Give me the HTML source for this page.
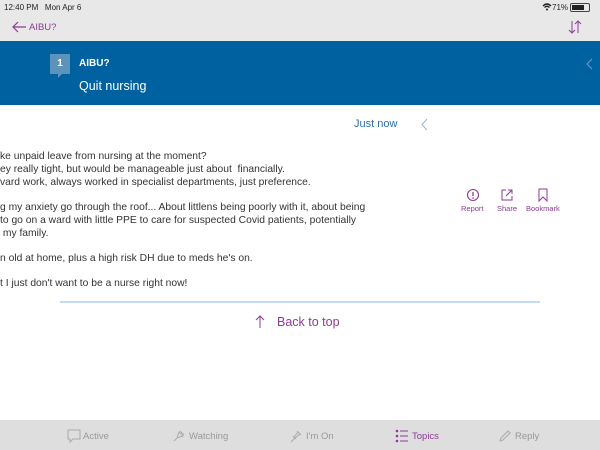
<!DOCTYPE html>
<html><head><meta charset="utf-8"><style>
*{margin:0;padding:0;box-sizing:border-box}
body{width:600px;height:450px;overflow:hidden;background:#fff;font-family:"Liberation Sans",sans-serif;position:relative}
.a{position:absolute;white-space:nowrap}
.top{left:0;top:0;width:600px;height:41px;background:#e8e8e8}
.blue{left:0;top:41px;width:600px;height:64px;background:#0061a1}
.t{font-size:10.3px;color:#333;left:0}
.bar{left:0;top:420px;width:600px;height:30px;background:#dedede}
.tab{font-size:9.5px;color:#999;top:431px}
.p{color:#8e3a96}
</style></head><body>
<div class="a top"></div>
<div class="a" style="left:4px;top:3px;font-size:8px;color:#222">12:40 PM&nbsp;&nbsp; Mon Apr 6</div>
<div class="a" style="left:552px;top:3px;font-size:8px;color:#222">71%</div>
<svg class="a" style="left:542px;top:3px" width="10" height="8" viewBox="0 0 10 8"><path d="M1 3 Q5 -1 9 3 M2.5 4.5 Q5 2 7.5 4.5" stroke="#222" stroke-width="1.3" fill="none"/><circle cx="5" cy="6.5" r="1" fill="#222"/></svg>
<div class="a" style="left:570px;top:3px;width:20px;height:9px;border:1px solid #444;border-radius:2px"><div style="margin:1px;width:12px;height:5px;background:#222"></div></div>
<svg class="a" style="left:11px;top:21px" width="16" height="12" viewBox="0 0 16 12"><path d="M15 6H2M7 1L2 6l5 5" stroke="#8e3a96" stroke-width="1.2" fill="none"/></svg>
<div class="a p" style="left:29px;top:22px;font-size:9.5px">AIBU?</div>
<svg class="a" style="left:568px;top:20px" width="14" height="14" viewBox="0 0 14 14"><path d="M4 1v12M1 10l3 3 3-3M10 13V1M7 4l3-3 3 3" stroke="#8e3a96" stroke-width="1" fill="none"/></svg>
<div class="a blue"></div>
<div class="a" style="left:50px;top:54px;width:20px;height:20px;background:#5b93bd;color:#fff;font-size:10px;font-weight:bold;text-align:center;line-height:20px">1</div>
<div class="a" style="left:58px;top:74px;width:0;height:0;border-left:4px solid #5b93bd;border-bottom:4px solid transparent"></div>
<div class="a" style="left:79px;top:58px;font-size:10px;font-weight:bold;color:#fff">AIBU?</div>
<div class="a" style="left:79px;top:79px;font-size:12.5px;color:#fff">Quit nursing</div>
<svg class="a" style="left:585px;top:58px" width="8" height="12" viewBox="0 0 8 12"><path d="M7 1L2 6l5 5" stroke="#6f9ec4" stroke-width="1" fill="none"/></svg>
<div class="a" style="left:354px;top:118px;font-size:11px;color:#2b6fb0">Just now</div>
<svg class="a" style="left:420px;top:118px" width="8" height="13" viewBox="0 0 8 13"><path d="M7 1L2 6.5 7 12" stroke="#8cb4d8" stroke-width="1" fill="none"/></svg>
<div class="a t" style="top:151px">ke unpaid leave from nursing at the moment?</div>
<div class="a t" style="top:164px">ey really tight, but would be manageable just about&nbsp; financially.</div>
<div class="a t" style="top:177px">vard work, always worked in specialist departments, just preference.</div>
<div class="a t" style="top:202px">g my anxiety go through the roof... About littlens being poorly with it, about being</div>
<div class="a t" style="top:215px">to go on a ward with little PPE to care for suspected Covid patients, potentially</div>
<div class="a t" style="top:228px">&nbsp;my family.</div>
<div class="a t" style="top:253px">n old at home, plus a high risk DH due to meds he's on.</div>
<div class="a t" style="top:278px">t I just don't want to be a nurse right now!</div>
<svg class="a" style="left:466px;top:188px" width="14" height="14" viewBox="0 0 14 14"><circle cx="7" cy="7" r="5.5" stroke="#8e3a96" stroke-width="1.1" fill="none"/><path d="M7 4v4" stroke="#8e3a96" stroke-width="1.3"/><circle cx="7" cy="10" r=".8" fill="#8e3a96"/></svg>
<svg class="a" style="left:500px;top:188px" width="14" height="14" viewBox="0 0 14 14"><path d="M6 2H2v10h10V8M8 2h4v4M12 2L6 8" stroke="#8e3a96" stroke-width="1" fill="none"/></svg>
<svg class="a" style="left:537px;top:188px" width="12" height="14" viewBox="0 0 12 14"><path d="M2 1h8v12L6 9 2 13z" stroke="#8e3a96" stroke-width="1" fill="none"/></svg>
<div class="a p" style="left:461px;top:204px;font-size:7.5px">Report</div>
<div class="a p" style="left:497px;top:204px;font-size:7.5px">Share</div>
<div class="a p" style="left:526px;top:204px;font-size:7.5px">Bookmark</div>
<div class="a" style="left:60px;top:301px;width:480px;height:1.5px;background:#c3dbec"></div>
<svg class="a" style="left:255px;top:315px" width="10" height="14" viewBox="0 0 10 14"><path d="M5 13V1M1 5l4-4 4 4" stroke="#8e3a96" stroke-width="1" fill="none"/></svg>
<div class="a p" style="left:277px;top:315px;font-size:12.5px">Back to top</div>
<div class="a bar"></div>
<svg class="a" style="left:67px;top:429px" width="14" height="14" viewBox="0 0 14 14"><path d="M1 1h12v9H6l-3 3v-3H1z" stroke="#aaa" stroke-width="1" fill="none"/></svg>
<div class="a tab" style="left:83px">Active</div>
<svg class="a" style="left:172px;top:429px" width="14" height="14" viewBox="0 0 14 14"><path d="M2 12l3-3M5 9l2-6 4 4-6 2zM8 2l4 4" stroke="#aaa" stroke-width="1" fill="none"/></svg>
<div class="a tab" style="left:189px">Watching</div>
<svg class="a" style="left:289px;top:429px" width="14" height="14" viewBox="0 0 14 14"><path d="M2 13l4-4M4 7l3 3M5 8l4-5 2 2-5 4M8 2l4 4" stroke="#aaa" stroke-width="1" fill="none"/></svg>
<div class="a tab" style="left:306px">I'm On</div>
<svg class="a" style="left:395px;top:429px" width="14" height="14" viewBox="0 0 14 14"><g fill="#8e3a96"><circle cx="2" cy="2" r="1.3"/><circle cx="2" cy="7" r="1.3"/><circle cx="2" cy="12" r="1.3"/></g><path d="M5 2h8M5 7h8M5 12h8" stroke="#8e3a96" stroke-width="1.1"/></svg>
<div class="a tab p" style="left:412px">Topics</div>
<svg class="a" style="left:498px;top:429px" width="14" height="14" viewBox="0 0 14 14"><path d="M2 12l1-3 7-7 2 2-7 7zM2 12l3-1" stroke="#aaa" stroke-width="1" fill="none"/></svg>
<div class="a tab" style="left:515px">Reply</div>
</body></html>
